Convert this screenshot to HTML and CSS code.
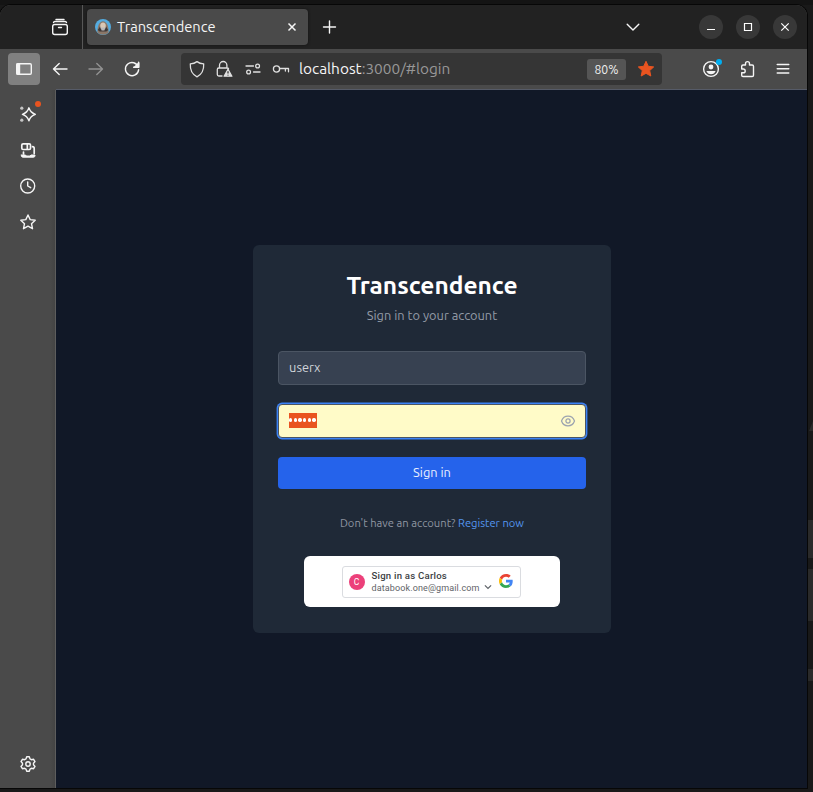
FILE: index.html
```html
<!DOCTYPE html>
<html lang="en">
<head>
<meta charset="utf-8">
<title>Transcendence</title>
<link rel="stylesheet" href="styles.css">
</head>
<body>
<div class="desktop">
<i class="behind b0"></i><i class="behind b1"></i><i class="behind b2"></i><i class="behind b3"></i>
<div class="window">
  <header class="tabbar">
    <div class="tabview"><svg class="icon" viewBox="0 0 20 20"><path d="M6 2.500h8M3.500 5.500q.3-1 1.300-1h10.400q1 0 1.300 1"/><rect x="2.700" y="7.500" width="14.600" height="10" rx="2"/><path d="M8.500 10.500h3"/></svg></div>
    <div class="tab">
      <svg class="favicon" viewBox="0 0 16 16"><circle cx="8" cy="8" r="8" fill="#55ace0"/><path d="M2.400 13.500C2.200 8 4 2.300 8 2.300s5.800 5.700 5.600 11.200A8 8 0 0 1 2.400 13.500z" fill="#8b7768"/><path d="M2.800 11L5 7.500h6l2.200 3.500-1.800 1.500H4.600z" fill="#3f3938"/><ellipse cx="8" cy="7" rx="2.800" ry="3.600" fill="#d9c8b6"/><path d="M5.600 8.600h4.800L9.400 11.500H6.600z" fill="#b9b9bb"/></svg>
      <span class="tab-title">Transcendence</span>
      <svg class="close" viewBox="0 0 10 10"><path d="M1.500 1.500l7 7M8.500 1.500l-7 7"/></svg>
    </div>
    <svg class="icon plus" viewBox="0 0 20 20"><path d="M9.500 4v12M3.500 10h12"/></svg>
    <svg class="icon alltabs" viewBox="0 0 20 20"><path d="M4.200 7.200l5.800 5.800 5.800-5.800"/></svg>
    <div class="controls">
      <span class="control"><svg viewBox="0 0 24 24"><path d="M8 14.500h8"/></svg></span>
      <span class="control"><svg viewBox="0 0 24 24"><path d="M8.500 8.500h7v7h-7z"/></svg></span>
      <span class="control"><svg viewBox="0 0 24 24"><path d="M8.300 8.300l7.400 7.400M15.700 8.300l-7.400 7.400"/></svg></span>
    </div>
  </header>
  <nav class="toolbar">
    <span class="tool pressed"><svg class="icon" viewBox="0 0 20 20"><rect x="2.700" y="4.700" width="14.600" height="10.600" rx="1.200"/><path d="M3 5h2.500v10H3z" fill="currentColor"/></svg></span>
    <span class="tool"><svg class="icon" viewBox="0 0 20 20"><path d="M17 10H3.500M9.200 4.500L3.500 10l5.700 5.500"/></svg></span>
    <span class="tool dim"><svg class="icon" viewBox="0 0 20 20"><path d="M3 10h13.500M10.800 4.500l5.700 5.500-5.700 5.500"/></svg></span>
    <span class="tool"><svg class="icon" viewBox="0 0 20 20"><path d="M16.300 8A6.600 6.600 0 1 0 16.600 10.800M16.600 3.200v5h-5"/><path d="M16.700 4v4.200h-4.200z" fill="currentColor"/></svg></span>
    <div class="urlbar">
      <svg class="icon shield" viewBox="0 0 20 20"><path d="M10 2.600c2.200 1.600 4.400 2.100 6.700 2.300.3 6-1.600 10.400-6.700 12.900C4.900 15.300 3 10.900 3.300 4.900 5.600 4.700 7.800 4.200 10 2.600z"/></svg>
      <svg class="icon lock" viewBox="0 0 20 20"><path d="M5.500 9V6.200a3.700 3.700 0 0 1 7.400 0V9M8 17H4.800a1.500 1.500 0 0 1-1.500-1.500v-5A1.500 1.500 0 0 1 4.800 9h8.400a1.500 1.500 0 0 1 1.400 1"/><path d="M14 10.400l3.900 6.800h-7.800z" fill="currentColor"/><path d="M14 12.200v2.400M14 15.800v.8" stroke="#353535" stroke-width="1.300" stroke-linecap="butt"/></svg>
      <svg class="icon perms" viewBox="0 0 20 20"><path d="M3 7h7.500M10.500 13H17"/><circle cx="14.600" cy="7" r="1.900"/><circle cx="5.600" cy="13" r="1.900"/></svg>
      <svg class="icon key" viewBox="0 0 20 20"><circle cx="5.500" cy="10" r="3.100"/><path d="M8.800 9.500h8.700v3.300M14.400 9.500v2.500"/></svg>
      <span class="url"><b>localhost</b>:3000/#login</span>
      <span class="zoom">80%</span>
      <svg class="star" viewBox="0 0 20 20"><path d="M10 2.300l2.300 5 5.400.6-4 3.700 1.100 5.400-4.800-2.700L5.200 17l1.100-5.400-4-3.700 5.400-.6z"/></svg>
    </div>
    <div class="actions">
      <span class="account"><svg class="icon" viewBox="0 0 20 20"><circle cx="10" cy="10" r="7.400"/><circle cx="10" cy="8" r="2.400" fill="currentColor" stroke="none"/><path d="M5.400 12h9.200c-.6 2-2.500 3.300-4.600 3.300S6 14 5.400 12z" fill="currentColor" stroke="none"/></svg><i class="dot"></i></span>
      <svg class="icon puzzle" viewBox="0 0 20 20"><path d="M3.700 10V7.300q0-1.300 1.300-1.300H7.500V4.600a2 2 0 0 1 4 0V6h2.700q1.300 0 1.300 1.300v8.900q0 1.300-1.300 1.300H5q-1.300 0-1.300-1.300v-2.400h1.600a1.900 1.900 0 0 0 0-3.800z"/></svg>
      <svg class="icon menu" viewBox="0 0 20 20"><path d="M4.200 5.500h11.600M4.200 9.700h11.600M4.200 14h11.600"/></svg>
    </div>
  </nav>
  <div class="content">
    <aside class="sidebar">
      <span class="side"><svg class="icon" viewBox="0 0 20 20"><path d="M10.900 3.800c1.200 3.900 2.600 5.300 6.500 6.500-3.900 1.200-5.300 2.600-6.500 6.500-1.200-3.900-2.600-5.300-6.500-6.500 3.900-1.200 5.300-2.600 6.500-6.500z"/><circle cx="3.800" cy="4.200" r="1.600" fill="#c5c5c5" stroke="none"/><circle cx="3.800" cy="16.200" r="1.600" fill="#c5c5c5" stroke="none"/></svg><i class="alert"></i></span>
      <span class="side"><svg class="icon heavy" viewBox="0 0 20 20"><rect x="3.800" y="3.800" width="8.700" height="5.700" rx="1.300"/><path d="M9.300 4v5M14.500 6.700q1.700 0 1.700 1.700V13.500M5.500 12v2"/><path d="M3.300 15h4.200l1 1h3.500l1-1h4v.6q0 1.600-1.500 1.600H4.800q-1.500 0-1.500-1.600z" fill="currentColor" stroke-width="1"/></svg></span>
      <span class="side"><svg class="icon" viewBox="0 0 20 20"><circle cx="9.700" cy="10" r="7"/><path d="M9.700 6V10l3 1.700"/></svg></span>
      <span class="side"><svg class="icon" viewBox="0 0 20 20"><path d="M10 3l2.200 4.600 5 .6-3.700 3.500 1 5-4.500-2.500-4.500 2.500 1-5-3.700-3.500 5-.6z"/></svg></span>
      <span class="side settings"><svg class="icon" viewBox="0 0 20 20"><path d="M8.700 2.800h2.600l.7 2.100 1.400.8 2.200-.4 1.400 2.300-1.500 1.600v1.600l1.500 1.600-1.400 2.300-2.200-.4-1.400.8-.7 2.100H8.700L8 15.100l-1.400-.8-2.200.4L3 12.400l1.500-1.600V9.200L3 7.600l1.400-2.300 2.200.4L8 4.900z"/><circle cx="10" cy="10" r="2.200"/></svg></span>
    </aside>
    <main class="page">
      <form class="card">
        <h1>Transcendence</h1>
        <p class="subtitle">Sign in to your account</p>
        <div class="field"><span>userx</span></div>
        <div class="field focused"><span class="selection"><i></i><i></i><i></i><i></i><i></i><i></i></span>
          <svg class="eye" viewBox="0 0 16 16"><path d="M1.500 8C2.600 4.900 5 3.200 8 3.200S13.400 4.900 14.500 8c-1.100 3.100-3.500 4.800-6.500 4.800S2.600 11.100 1.500 8z"/><circle cx="8" cy="8" r="2.100"/></svg></div>
        <div class="submit"><span>Sign in</span></div>
        <p class="register">Don't have an account? <a>Register now</a></p>
        <div class="google">
          <div class="gbutton">
            <span class="avatar">C</span>
            <div class="who"><span class="name">Sign in as Carlos</span><span class="mail">databook.one@gmail.com</span></div>
            <svg class="drop" viewBox="0 0 8 8"><path d="M.9 2.300l3.100 3.100 3.100-3.100"/></svg>
            <svg class="glogo" viewBox="0 0 48 48"><path fill="#ea4335" d="M24 9.500c3.540 0 6.710 1.220 9.210 3.600l6.850-6.850C35.900 2.380 30.470 0 24 0 14.620 0 6.510 5.380 2.560 13.220l7.980 6.190C12.430 13.720 17.740 9.500 24 9.500z"/><path fill="#4285f4" d="M46.980 24.550c0-1.570-.15-3.090-.38-4.550H24v9.020h12.940c-.58 2.960-2.260 5.480-4.780 7.180l7.730 6c4.510-4.180 7.090-10.360 7.090-17.650z"/><path fill="#fbbc05" d="M10.530 28.590c-.48-1.450-.76-2.990-.76-4.590s.27-3.140.76-4.590l-7.980-6.190C.92 16.460 0 20.120 0 24s.92 7.540 2.560 10.780z"/><path fill="#34a853" d="M24 48c6.480 0 11.930-2.130 15.890-5.810l-7.730-6c-2.150 1.450-4.920 2.300-8.160 2.300-6.260 0-11.570-4.220-13.470-9.910l-7.980 6.190C6.510 42.620 14.620 48 24 48z"/></svg>
          </div>
        </div>
      </form>
    </main>
  </div>
</div>
</div>
</body>
</html>
```
FILE: styles.css
```css
* { box-sizing: border-box; }
body { margin: 0; font-family: Ubuntu, "Noto Sans", sans-serif; background: #161616; }
h1, p { margin: 0; font-weight: normal; }
i { display: block; }
svg { display: block; flex: none; fill: none; }

.desktop { position: relative; width: 813px; height: 792px; padding-top: 5px; overflow: hidden; background: linear-gradient(#141414 0 5px, #191919 5px); }
.behind { position: absolute; right: 0; width: 5px; background: #2a2a2a; }
.b0 { top: 421px; height: 10px; width: 4px; clip-path: polygon(100% 0, 100% 100%, 0 100%); }
.b1 { top: 520px; height: 38px; }
.b2 { top: 569px; height: 52px; }
.b3 { top: 669px; height: 12px; }

.window { position: relative; width: 807px; height: 783px; border-radius: 11px 11px 0 0; overflow: hidden; box-shadow: 0 0 0 1px #070707; display: flex; flex-direction: column; background: #4a4a4a; color: #f5f5f5; }
.icon { width: 20px; height: 20px; stroke: currentColor; stroke-width: 1.4; stroke-linecap: round; stroke-linejoin: round; }
.heavy { stroke-width: 1.7; }

.tabbar { height: 44px; flex: none; display: flex; align-items: center; background: #222; }
.tabview { width: 83px; height: 44px; padding-left: 50px; display: flex; align-items: center; border-right: 1px solid #575757; }
.tab { width: 221px; height: 36px; margin-left: 4px; padding: 0 11px 0 8px; display: flex; align-items: center; border-radius: 4px; background: #4a4a4a; box-shadow: 0 0 3px #111; }
.favicon { width: 16px; height: 16px; }
.tab-title { margin-left: 6px; padding-bottom: 1px; font-size: 14.667px; line-height: 17px; white-space: nowrap; }
.close { width: 10px; height: 10px; margin-left: auto; stroke: #f5f5f5; stroke-width: 1.5; }
.plus { margin-left: 12px; }
.alltabs { margin-left: 283px; }
.controls { display: flex; gap: 13px; margin-left: 56px; }
.control { width: 24px; height: 24px; border-radius: 50%; background: #383838; }
.control svg { width: 24px; height: 24px; stroke: #fff; stroke-width: 1.2; }

.toolbar { height: 41px; flex: none; display: flex; align-items: center; gap: 4px; padding: 0 14px 1px 8px; }
.tool { width: 32px; height: 32px; display: flex; align-items: center; justify-content: center; border-radius: 4px; }
.pressed { background: #808080; }
.dim { color: #929292; }
.urlbar { width: 481px; height: 32px; margin-left: 29px; padding: 0 6px; display: flex; align-items: center; border-radius: 4px; background: #353535; }
.urlbar .icon { color: #e0e0e0; stroke-width: 1.3; }
.lock { margin-left: 7px; }
.perms { margin-left: 9px; }
.key { margin-left: 8px; }
.url { flex: 1; margin-left: 8px; padding-bottom: 1px; font-size: 15.4px; color: #989898; white-space: nowrap; }
.url b { font-weight: normal; color: #f5f5f5; }
.zoom { width: 39px; height: 21px; line-height: 21px; border-radius: 3px; background: #555; text-align: center; font-size: 12.2px; color: #eee; }
.star { width: 20px; height: 20px; margin-left: 10px; fill: #e95420; stroke: #e95420; stroke-linejoin: round; }
.actions { display: flex; align-items: center; margin-left: 35px; gap: 17px; }
.menu { margin-left: -2px; }
.account { position: relative; }
.dot { position: absolute; top: 0; right: -1px; width: 6px; height: 6px; border-radius: 50%; background: #00aef0; }

.content { flex: 1; display: flex; min-height: 0; }
.sidebar { width: 56px; padding: 6px 0 6px 10px; display: flex; flex-direction: column; border-right: 1px solid #5d5d5d; background: linear-gradient(90deg, #4a4a4a 50px, #444); }
.side { position: relative; width: 36px; height: 36px; display: flex; align-items: center; justify-content: center; }
.alert { position: absolute; top: 5px; right: 5px; width: 6px; height: 6px; border-radius: 50%; background: #e95420; }
.settings { margin-top: auto; }
.page { flex: 1; display: flex; align-items: center; justify-content: center; border-top: 1px solid #565b68; margin-top: -1px; background: #111827; }

.card { width: 358px; height: 388px; padding: 25px; display: flex; flex-direction: column; align-items: center; border-radius: 6px; background: #1f2937; }
h1 { height: 31px; line-height: 31px; padding-left: 1px; color: #fff; font-size: 24.5px; font-weight: 700; white-space: nowrap; }
.subtitle { height: 20px; margin-top: 4px; padding-left: 1px; line-height: 20px; font-size: 12.8px; color: #949ba7; }
.field { width: 308px; height: 34px; margin-top: 26px; padding: 0 9px 2px 10px; display: flex; align-items: center; border: 1px solid #4b5563; border-radius: 4px; background: #374151; font-size: 12.8px; color: #d1d5db; }
.field > span:not(.selection) { padding-left: .6px; }
.focused { margin-top: 19px; background: #fffbc8; box-shadow: 0 0 0 1.4px #3b82f6; }
.selection { display: flex; width: 28px; height: 15px; background: #e95420; align-items: center; justify-content: space-around; }
.selection i { width: 3.3px; height: 3.3px; border-radius: 50%; background: #fff; }
.eye { width: 16px; height: 16px; margin: 1px 0 0 auto; stroke: #9ca3af; stroke-width: 1.25; }
.submit { width: 308px; height: 32px; margin-top: 19px; padding-left: 1px; line-height: 31px; border-radius: 4px; background: #2563eb; text-align: center; font-size: 12.8px; color: #e8efff; }
.register { height: 16px; margin-top: 26px; padding-left: 1px; line-height: 16px; font-size: 11.2px; color: #8f96a2; white-space: nowrap; }
.register a { color: #5496ee; }
.google { width: 256px; height: 51px; margin-top: 25px; display: flex; justify-content: center; align-items: center; border-radius: 6px; background: #fff; }
.gbutton { width: 179px; height: 32px; padding: 0 7px 0 6px; display: flex; align-items: center; border: 1px solid #dadce0; border-radius: 3px; margin-right: 1px; font-family: Roboto, sans-serif; }
.avatar { width: 16px; height: 16px; flex: none; line-height: 16px; border-radius: 50%; background: #ec407a; color: #fff; text-align: center; font-size: 8.5px; }
.who { width: 108px; margin-left: 7px; display: flex; flex-direction: column; white-space: nowrap; font-size: 9px; letter-spacing: .12px; line-height: 12px; color: #5f6368; }
.name { font-weight: 500; font-size: 9.6px; letter-spacing: .22px; color: #3c4043; }
.drop { width: 8px; height: 8px; margin: 11px 0 0 4px; stroke: #5f6368; stroke-width: 1.2; }
.glogo { width: 14px; height: 14px; margin: 0 0 2px auto; }
```
